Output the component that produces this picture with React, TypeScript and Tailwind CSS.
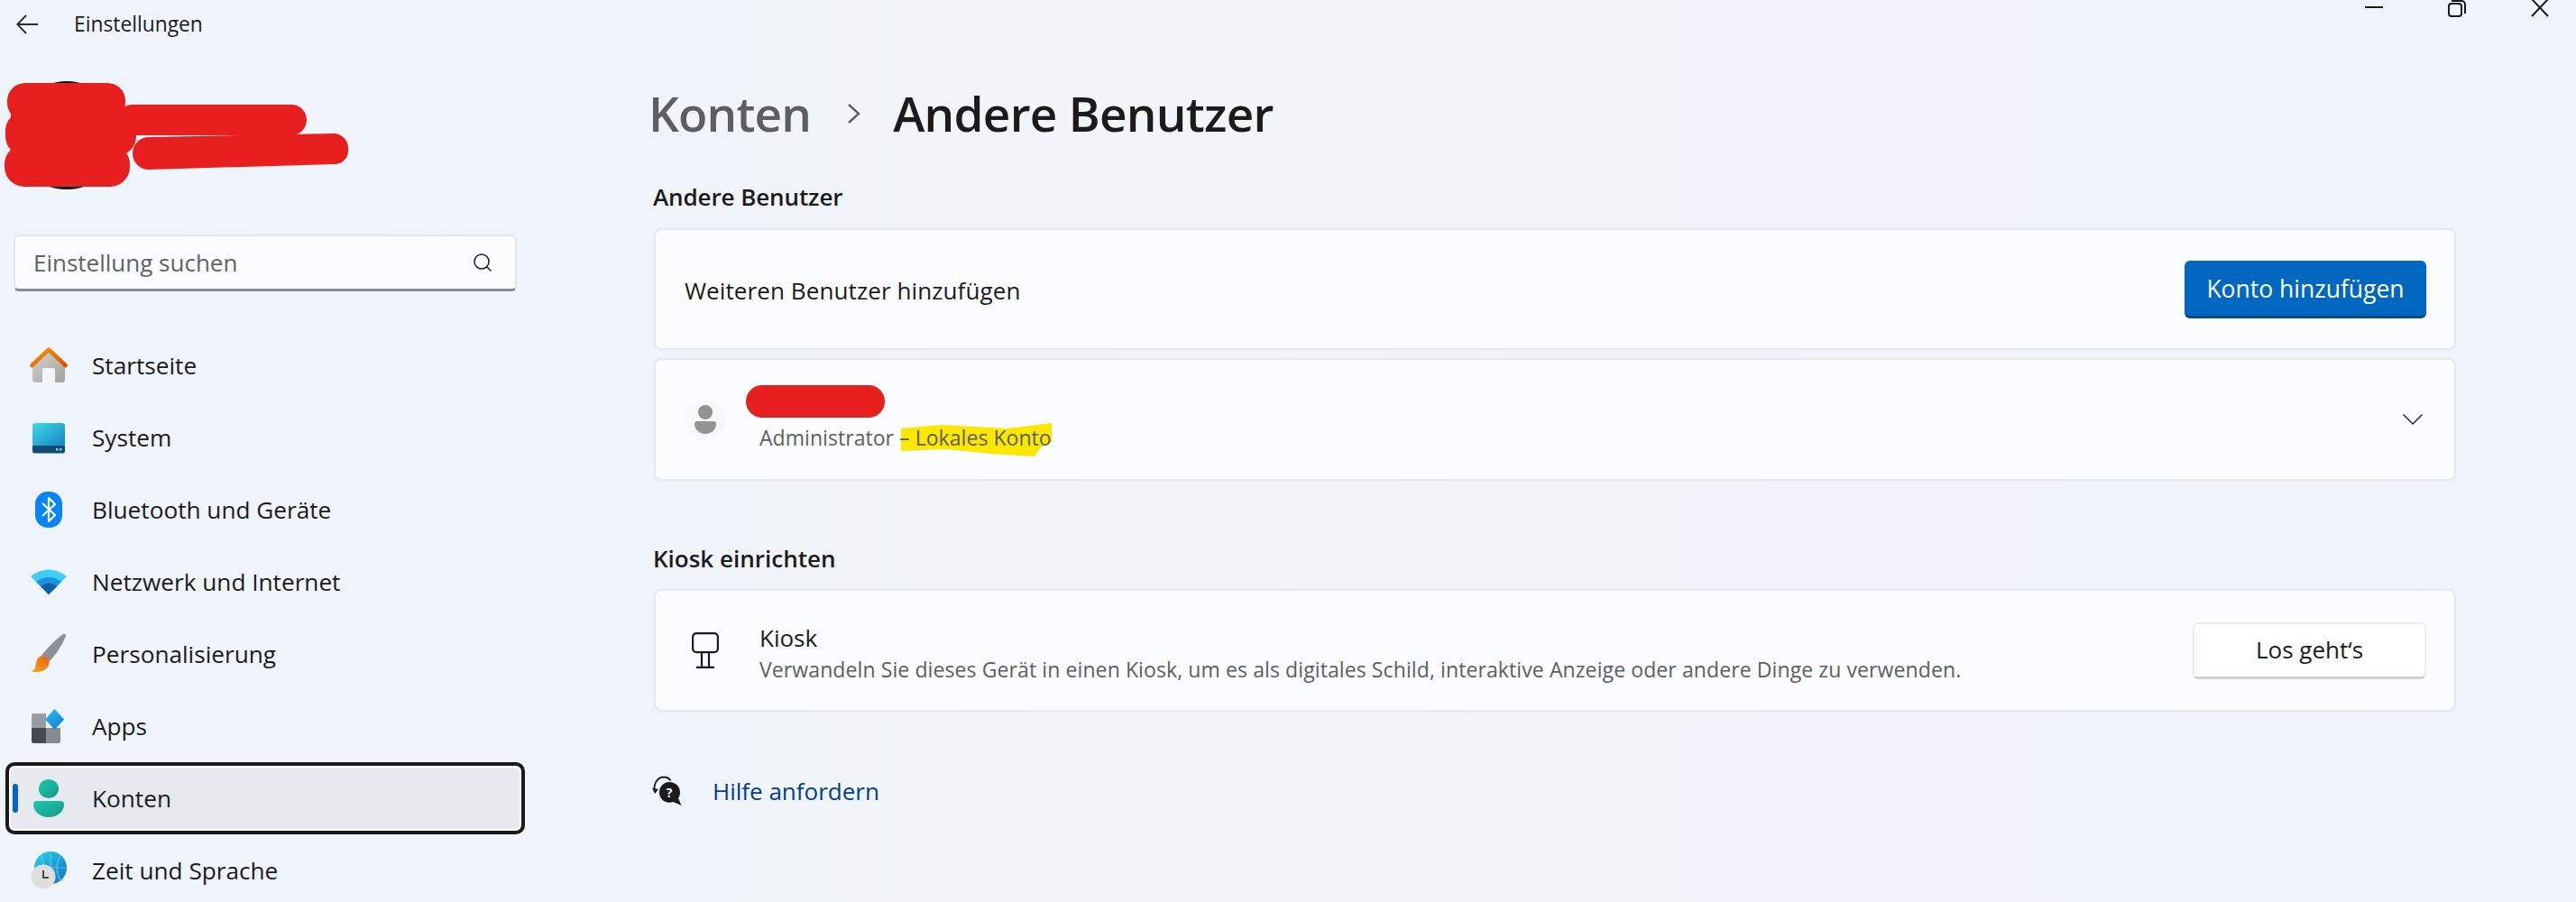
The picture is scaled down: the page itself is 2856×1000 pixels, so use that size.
import { Search } from "lucide-react";
import type { ReactNode } from "react";

const HomeIcon = () => (
  <svg width="42" height="42" viewBox="0 0 42 42">
    <defs>
      <linearGradient id="homeWall" x1="0" y1="0" x2="1" y2="1">
        <stop offset="0" stopColor="#d6d4d2" />
        <stop offset="1" stopColor="#a3a1a0" />
      </linearGradient>
      <linearGradient id="homeRoof" x1="0" y1="0" x2="1" y2="1">
        <stop offset="0" stopColor="#f59a12" />
        <stop offset="1" stopColor="#d94f00" />
      </linearGradient>
    </defs>
    <path d="M3 20 21 5l18 15v17a3 3 0 0 1-3 3h-8V26a2 2 0 0 0-2-2h-10a2 2 0 0 0-2 2v14H6a3 3 0 0 1-3-3Z" fill="url(#homeWall)" />
    <path d="M2.5 21 21 3.5 39.500 21" fill="none" stroke="url(#homeRoof)" strokeWidth="4.500" strokeLinecap="round" strokeLinejoin="round" />
  </svg>
);

const SystemIcon = () => (
  <svg width="36" height="36" viewBox="0 0 36 36">
    <defs>
      <linearGradient id="systemFace" x1="0" y1="0" x2="1" y2="1">
        <stop offset="0" stopColor="#3bdde8" />
        <stop offset="1" stopColor="#1a7fc0" />
      </linearGradient>
    </defs>
    <rect x="0" y="2" width="36" height="26" rx="3" fill="url(#systemFace)" />
    <path d="M0 27h36v6a2.500 2.500 0 0 1-2.500 2.500h-31A2.500 2.500 0 0 1 0 33Z" fill="#0d4c73" />
    <rect x="26" y="30" width="2.500" height="2.500" fill="#8fc4dd" />
    <rect x="30" y="30" width="2.500" height="2.500" fill="#8fc4dd" />
  </svg>
);

const BluetoothIcon = () => (
  <svg width="30" height="40" viewBox="0 0 30 40">
    <rect x="0" y="0" width="30" height="40" rx="14" fill="#0a84fa" />
    <path d="M8 13 22 26l-7 7V7l7 7L8 27" fill="none" stroke="#fff" strokeWidth="2.200" strokeLinejoin="round" />
  </svg>
);

const WifiIcon = () => (
  <svg width="40" height="30" viewBox="0 0 40 30">
    <path d="M0 9Q20-6 40 9L20 29Z" fill="#3fcdf7" />
    <path d="M6 15Q20 5 34 15L20 29Z" fill="#1e92dd" />
    <path d="M11 20Q20 13 29 20L20 29Z" fill="#0f5fa8" />
  </svg>
);

const BrushIcon = () => (
  <svg width="40" height="48" viewBox="0 0 40 48">
    <defs>
      <linearGradient id="brushTip" x1="0" y1="1" x2="1" y2="0">
        <stop offset="0" stopColor="#f9a11b" />
        <stop offset="1" stopColor="#e8650f" />
      </linearGradient>
    </defs>
    <path d="M36 2c2-1 3.500 .5 3 2.500C35 14 28 25 20 33l-9-6C18 18 27 8 36 2Z" fill="#8b9196" />
    <path d="M10 27c5-2 11 1 10.500 7-.5 6-7 10-14 10-3 0-5-.3-5.500-1 3.500-1 4-4 5-9 .6-3 2-6 4-7Z" fill="url(#brushTip)" />
  </svg>
);

const AppsIcon = () => (
  <svg width="38" height="38" viewBox="0 0 38 38">
    <defs>
      <linearGradient id="appsGem" x1="0" y1="0" x2="1" y2="1">
        <stop offset="0" stopColor="#35c0f5" />
        <stop offset="1" stopColor="#0a78d8" />
      </linearGradient>
    </defs>
    <path d="M2 5h14v17H0V7a2 2 0 0 1 2-2Z" fill="#989da2" />
    <path d="M0 21h16v17H2a2 2 0 0 1-2-2Z" fill="#46494d" />
    <path d="M16 21h16v15a2 2 0 0 1-2 2H16Z" fill="#868b90" />
    <path d="M25.500 0 36 11.500 25.500 23 15 11.500Z" fill="url(#appsGem)" />
  </svg>
);

const AccountIcon = () => (
  <svg width="34" height="42" viewBox="0 0 34 42">
    <defs>
      <linearGradient id="accountFill" x1="0" y1="0" x2="1" y2="1">
        <stop offset="0" stopColor="#1fc7a9" />
        <stop offset="1" stopColor="#16998f" />
      </linearGradient>
    </defs>
    <ellipse cx="17" cy="10.500" rx="11" ry="10.500" fill="url(#accountFill)" />
    <path d="M4 24h26a4 4 0 0 1 4 4c0 8-8 14-17 14S0 36 0 28a4 4 0 0 1 4-4Z" fill="url(#accountFill)" />
  </svg>
);

const GlobeClockIcon = () => (
  <svg width="42" height="42" viewBox="0 0 42 42">
    <defs>
      <linearGradient id="globeFill" x1="0" y1="0" x2="1" y2="1">
        <stop offset="0" stopColor="#2fd2e0" />
        <stop offset="1" stopColor="#1170c8" />
      </linearGradient>
    </defs>
    <circle cx="23" cy="18" r="18" fill="url(#globeFill)" />
    <path d="M5 18h36M23 0v36M12 4c5 9 5 19 0 28M34 4c-5 9-5 19 0 28" fill="none" stroke="#5fdcec" strokeWidth="1.200" opacity="0.700" />
    <circle cx="15" cy="28" r="13.500" fill="#dfdedc" />
    <path d="M15 21v8h6" fill="none" stroke="#4b4b4b" strokeWidth="2" />
  </svg>
);

const KioskIcon = () => (
  <svg width="30" height="40" viewBox="0 0 30 40" fill="none" stroke="#1b1b1b" strokeWidth="2.200">
    <rect x="1.100" y="1.100" width="27.800" height="21" rx="4" />
    <path d="M11 22v16M19 22v16M5 38.800h20" />
  </svg>
);

const HelpIcon = () => (
  <svg width="34" height="34" viewBox="0 0 34 34">
    <path d="M3 17C1 9 6 1.500 13 1.500c3.500 0 6 1.500 7.500 4" fill="none" stroke="#1b1b1b" strokeWidth="1.800" />
    <path d="M0 13.500 3 20l4-5Z" fill="#1b1b1b" />
    <path d="M19 7c7 0 12 5 12 11.500 0 2.500-.7 4.500-2 6.500l3.500 8-9-4c-1.500.5-3 .7-4.500.7-6.500 0-11-5-11-11.200S12.500 7 19 7Z" fill="#1b1b1b" />
    <text x="19" y="24" textAnchor="middle" fontSize="14" fontWeight="700" fill="#fff" fontFamily="'Open Sans', sans-serif">?</text>
  </svg>
);

const navItems: { label: string; icon: ReactNode; active?: boolean }[] = [
  { label: "Startseite", icon: <HomeIcon /> },
  { label: "System", icon: <SystemIcon /> },
  { label: "Bluetooth und Geräte", icon: <BluetoothIcon /> },
  { label: "Netzwerk und Internet", icon: <WifiIcon /> },
  { label: "Personalisierung", icon: <BrushIcon /> },
  { label: "Apps", icon: <AppsIcon /> },
  { label: "Konten", icon: <AccountIcon />, active: true },
  { label: "Zeit und Sprache", icon: <GlobeClockIcon /> },
];

const Card = ({ children, className }: { children: ReactNode; className: string }) => (
  <div className={`flex items-center rounded-lg border-2 border-[#e4e9ef] bg-[#fbfcfe] pl-[32px] pr-[31px] ${className}`}>
    {children}
  </div>
);

export default function App() {
  return (
    <div className="flex h-[1000px] w-[2856px] flex-col overflow-hidden bg-gradient-to-r from-[#eff4fb] via-[#f1f5f9] to-[#eff3fb] font-['Open_Sans',sans-serif] text-[#1b1b1b]">
      {/* Title bar */}
      <div className="flex h-[54px] shrink-0 items-start justify-between">
        <div className="flex items-center pl-[18px] pt-[8px]">
          <svg width="24" height="22" viewBox="0 0 24 22" fill="none" stroke="#2b2b2b" strokeWidth="1.800">
            <path d="M24 11H1.500M11 1 1.300 11 11 21" />
          </svg>
          <span className="ml-[40px] text-[22.800px] leading-[38px]">Einstellungen</span>
        </div>
        <div className="flex items-start gap-[72px] pr-[30px]">
          <div className="mt-[7px] h-[2px] w-[20px] bg-[#1b1b1b]" />
          <svg width="20" height="19" viewBox="0 0 20 19" fill="none" stroke="#1b1b1b" strokeWidth="2">
            <rect x="1" y="4" width="14" height="14" rx="3" />
            <path d="M4 1h11a4 4 0 0 1 4 4v10" />
          </svg>
          <svg width="20" height="19" viewBox="0 0 20 19" fill="none" stroke="#1b1b1b" strokeWidth="2">
            <path d="M1 -1 19 18M19 -1 1 18" />
          </svg>
        </div>
      </div>

      <div className="flex min-h-0 flex-1">
        {/* Sidebar */}
        <aside className="w-[725px] shrink-0">
          <svg width="400" height="206" viewBox="0 54 400 206" className="block">
            <circle cx="74" cy="150" r="60" fill="#111" />
            <g fill="#e71f1f">
              <rect x="12" y="100" width="124" height="100" />
              <rect x="8" y="92" width="131" height="42" rx="20" />
              <rect x="6" y="123" width="145" height="50" rx="22" />
              <rect x="5" y="160" width="139" height="47" rx="22" />
              <rect x="130" y="116" width="210" height="34" rx="17" />
              <path d="M165 152 370 148a16 16 0 0 1 16 16v4a15 15 0 0 1-16 14l-205 6a18 18 0 0 1-18-18a18 18 0 0 1 18-18Z" />
            </g>
          </svg>

          <div className="ml-[15px] flex h-[63px] w-[558px] items-center justify-between rounded-md border-2 border-b-[3px] border-[#e3e6ea] border-b-[#868a8f] bg-[#fbfcfe] pl-[20px] pr-[24px]">
            <span className="text-[26px] text-[#5f6368]">Einstellung suchen</span>
            <Search size={24} strokeWidth={1.500} className="text-[#1b1b1b]" />
          </div>

          <nav className="mt-[42px] flex w-[588px] flex-col">
            {navItems.map((item) =>
              item.active ? (
                <div key={item.label} className="relative ml-[6px] h-[80px] w-[576px] rounded-[10px] border-[4px] border-[#1a1a1a] bg-[#fbfcfe] p-[2px]">
                  <div className="flex h-full items-center rounded-md bg-[#e6e9ee] pl-[21px]">
                    <div className="flex w-[42px] justify-center">{item.icon}</div>
                    <span className="ml-[27px] pt-[2px] text-[26.200px]">{item.label}</span>
                  </div>
                  <div className="absolute left-[4px] top-[20px] h-[32px] w-[6px] rounded-full bg-[#0a62c4]" />
                </div>
              ) : (
                <div key={item.label} className="flex h-[80px] items-center pl-[33px]">
                  <div className="flex w-[42px] justify-center">{item.icon}</div>
                  <span className="ml-[27px] pt-[2px] text-[26.200px]">{item.label}</span>
                </div>
              ),
            )}
          </nav>
        </aside>

        {/* Content */}
        <main className="w-[1998px] shrink-0">
          <div className="mt-[36px] flex h-[72px] items-center -ml-[6px]">
            <span className="text-[53px] font-semibold tracking-[-0.8px] text-[#5d5e60]">Konten</span>
            <svg width="18" height="26" viewBox="0 0 18 26" fill="none" stroke="#5d5e60" strokeWidth="2.400" className="ml-[39px]">
              <path d="M3 3 14 13 3 23" />
            </svg>
            <span className="ml-[34px] text-[53px] font-semibold tracking-[-0.7px]">Andere Benutzer</span>
          </div>

          <h2 className="mt-[36px] h-[40px] text-[26px] font-semibold leading-[40px] tracking-[-0.1px] -ml-[1px]">Andere Benutzer</h2>

          <Card className="mt-[15px] h-[135px] justify-between">
            <span className="pt-[3px] text-[26px] tracking-[0.1px]">Weiteren Benutzer hinzufügen</span>
            <button className="flex h-[64px] w-[268px] items-center justify-center rounded-md border-b-[3px] border-[#004c87] bg-[#0067c0] pt-[3px] text-[26.500px] text-white">
              Konto hinzufügen
            </button>
          </Card>

          <Card className="mt-[9px] h-[136px] justify-between">
            <div className="flex items-center">
              <div className="flex h-[46px] w-[46px] items-center justify-center rounded-full bg-[#f8f8f8]">
                <svg width="24" height="32" viewBox="0 0 24 32" fill="#939393">
                  <circle cx="12" cy="8" r="8" />
                  <path d="M3 18h18a3 3 0 0 1 3 3c0 6-5 11-12 11S0 27 0 21a3 3 0 0 1 3-3Z" />
                </svg>
              </div>
              <div className="ml-[37px] flex flex-col">
                <div className="-ml-[15px] h-[36px] w-[154px] rounded-[18px] bg-[#e71f1f]" />
                <div className="relative mt-[3px] text-[23px] leading-[38px] tracking-[0.05px] text-[#5d5e60]">
                  <svg width="168" height="38" viewBox="0 0 168 38" className="absolute left-[157px] top-[3px]">
                    <path d="M0 6 44 2 118 6 167 0V21L155 27 148 37 100 34 48 29 0 31Z" fill="#fce700" />
                  </svg>
                  <span className="relative">Administrator – Lokales Konto</span>
                </div>
              </div>
            </div>
            <svg width="24" height="14" viewBox="0 0 24 14" fill="none" stroke="#2b2b2b" strokeWidth="1.500" className="mr-[3px]">
              <path d="M1.500 1.500 12 12 22.500 1.500" />
            </svg>
          </Card>

          <h2 className="mt-[66px] h-[40px] text-[26px] font-semibold leading-[40px] -ml-[1px]">Kiosk einrichten</h2>

          <Card className="mt-[14px] h-[136px] justify-between">
            <div className="flex items-center">
              <div className="flex w-[46px] justify-center">
                <KioskIcon />
              </div>
              <div className="ml-[37px] mt-[6px] flex flex-col">
                <span className="text-[26px] leading-[36px]">Kiosk</span>
                <span className="text-[23px] leading-[34px] tracking-[0.1px] text-[#5d5e60]">
                  Verwandeln Sie dieses Gerät in einen Kiosk, um es als digitales Schild, interaktive Anzeige oder andere Dinge zu verwenden.
                </span>
              </div>
            </div>
            <button className="flex h-[63px] w-[259px] items-center justify-center rounded-md border-2 border-b-[3px] border-[#ececec] border-b-[#d0d0d0] bg-[#fefefe] text-[26px]">
              Los geht‘s
            </button>
          </Card>

          <div className="mt-[68px] -ml-[2px] flex h-[40px] items-center">
            <HelpIcon />
            <span className="ml-[33px] text-[26px] text-[#003e92]">Hilfe anfordern</span>
          </div>
        </main>
      </div>
    </div>
  );
}
